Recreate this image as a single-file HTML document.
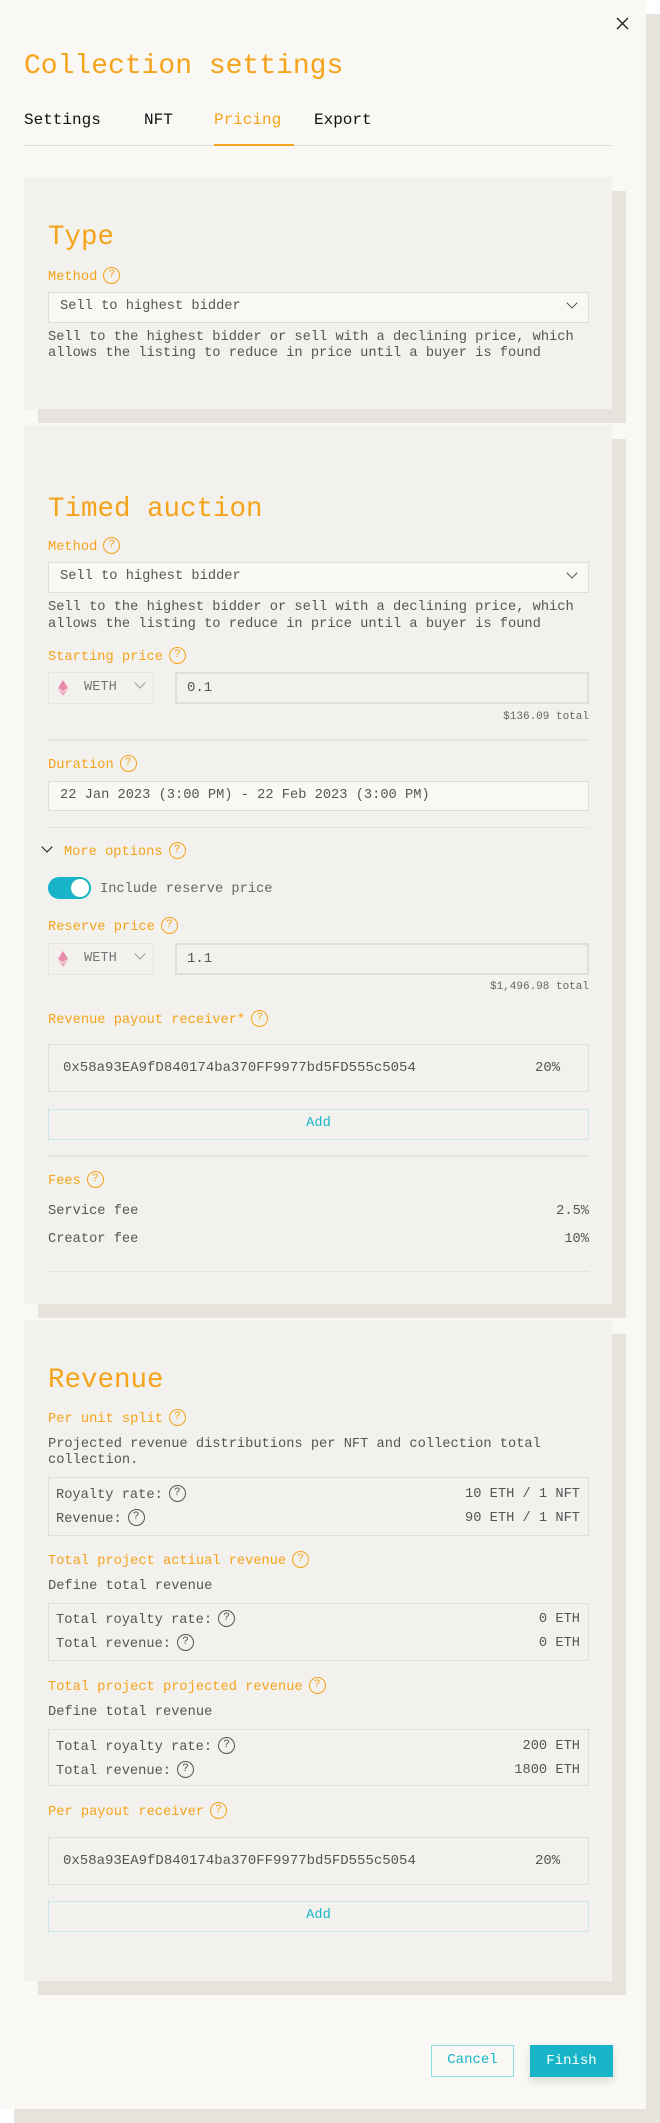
<!DOCTYPE html>
<html><head><meta charset="utf-8"><style>
*{margin:0;padding:0;box-sizing:border-box}
body{width:660px;height:2123px;background:#fff;position:relative;overflow:hidden;font-family:"Liberation Mono",monospace;color:#555}
.a{position:absolute;white-space:nowrap}
.sh{position:absolute;background:#e6e2dc}
.card{position:absolute;background:#f2f1ed;left:24px;width:588px}
.o{color:#f5a31a;font-size:13.7px;line-height:18px}
.t{font-size:13.7px;line-height:18px;color:#555}
.h{color:#f5a31a;font-size:27.5px;line-height:32px;left:48px}
.q{display:inline-block;width:17px;height:17px;border:1.5px solid #f5a31a;border-radius:50%;font-size:11px;line-height:14px;text-align:center;vertical-align:middle;margin-left:6px;color:#f5a31a;position:relative;top:-1px}
.q.d{border-color:#555;color:#555}
.box{position:absolute;left:48px;width:541px;border:1.5px solid #e0ded9}
.sel{background:#f9f8f5}
.div{position:absolute;left:48px;width:541px;height:2px;background:#e6e4e0}
.add{position:absolute;left:48px;width:541px;border:1.5px dotted #9fdde5;color:#18b5c8;text-align:center;font-size:13.7px}
.chev{position:absolute;width:8px;height:8px;border-right:1.3px solid #555;border-bottom:1.3px solid #555;transform:rotate(45deg)}
.eth{position:absolute;width:10px;height:16px}
</style></head><body>
<div class="sh" style="left:14px;top:14px;width:646px;height:2109px"></div>
<div style="position:absolute;left:0;top:0;width:646px;height:2109px;background:#f9f8f5"></div>

<svg class="a" style="left:616px;top:17px" width="13" height="13" viewBox="0 0 13 13"><path d="M1 1L12 12M12 1L1 12" stroke="#222" stroke-width="1.4"/></svg>
<div class="a" style="left:24px;top:51px;font-size:28px;line-height:32px;color:#f5a31a">Collection settings</div>
<div class="a" style="left:24px;top:110px;font-size:16px;line-height:20px;color:#111">Settings</div>
<div class="a" style="left:144px;top:110px;font-size:16px;line-height:20px;color:#111">NFT</div>
<div class="a" style="left:214px;top:110px;font-size:16px;line-height:20px;color:#f5a31a">Pricing</div>
<div class="a" style="left:314px;top:110px;font-size:16px;line-height:20px;color:#111">Export</div>
<div class="a" style="left:24px;top:145px;width:588px;height:1px;background:#deddd9"></div>
<div class="a" style="left:214px;top:144px;width:80px;height:2px;background:#f5a31a"></div>

<!-- card 1 -->
<div class="sh" style="left:38px;top:191px;width:588px;height:232px"></div>
<div class="card" style="top:177px;height:232px"></div>
<div class="a h" style="top:222px">Type</div>
<div class="a o" style="left:48px;top:268px">Method<span class="q">?</span></div>
<div class="box sel" style="top:292px;height:31px"></div>
<div class="a t" style="left:60px;top:298px">Sell to highest bidder</div>
<div class="chev" style="left:568px;top:299px"></div>
<div class="a t" style="left:48px;top:330px;line-height:16px">Sell to the highest bidder or sell with a declining price, which<br>allows the listing to reduce in price until a buyer is found</div>

<!-- card 2 -->
<div class="sh" style="left:38px;top:439px;width:588px;height:879px"></div>
<div class="card" style="top:425px;height:879px"></div>
<div class="a h" style="top:494px">Timed auction</div>
<div class="a o" style="left:48px;top:538px">Method<span class="q">?</span></div>
<div class="box sel" style="top:562px;height:31px"></div>
<div class="a t" style="left:60px;top:568px">Sell to highest bidder</div>
<div class="chev" style="left:568px;top:569px"></div>
<div class="a t" style="left:48px;top:599px;line-height:17px">Sell to the highest bidder or sell with a declining price, which<br>allows the listing to reduce in price until a buyer is found</div>

<div class="a o" style="left:48px;top:648px">Starting price<span class="q">?</span></div>
<div class="box" style="top:672px;height:32px;width:106px;border-color:#e8e6e1"></div>
<svg class="eth" style="left:58px;top:680px" viewBox="0 0 10 16"><path d="M5 0L10 8 5 11 0 8z" fill="#e88aaa"/><path d="M5 12L10 9 5 16 0 9z" fill="#f0a8c0"/></svg>
<div class="a t" style="left:84px;top:679px;color:#777">WETH</div>
<div class="chev" style="left:136px;top:679px;border-color:#999"></div>
<div class="box" style="top:672px;height:32px;left:175px;width:414px;border-width:2px"></div>
<div class="a t" style="left:187px;top:679px;font-size:14px">0.1</div>
<div class="a" style="right:71px;top:710px;font-size:11px;line-height:14px;color:#666">$136.09 total</div>
<div class="div" style="top:739px"></div>

<div class="a o" style="left:48px;top:756px">Duration<span class="q">?</span></div>
<div class="box sel" style="top:781px;height:30px"></div>
<div class="a t" style="left:60px;top:787px">22 Jan 2023 (3:00 PM) - 22 Feb 2023 (3:00 PM)</div>
<div class="div" style="top:827px;height:1px"></div>

<div class="chev" style="left:43px;top:843px;border-color:#111"></div>
<div class="a o" style="left:64px;top:843px">More options<span class="q">?</span></div>
<div class="a" style="left:48px;top:877px;width:43px;height:22px;border-radius:11px;background:#18b5c8"></div>
<div class="a" style="left:71px;top:879px;width:18px;height:18px;border-radius:50%;background:#fff"></div>
<div class="a t" style="left:100px;top:881px;color:#666">Include reserve price</div>

<div class="a o" style="left:48px;top:918px">Reserve price<span class="q">?</span></div>
<div class="box" style="top:943px;height:32px;width:106px;border-color:#e8e6e1"></div>
<svg class="eth" style="left:58px;top:951px" viewBox="0 0 10 16"><path d="M5 0L10 8 5 11 0 8z" fill="#e88aaa"/><path d="M5 12L10 9 5 16 0 9z" fill="#f0a8c0"/></svg>
<div class="a t" style="left:84px;top:950px;color:#777">WETH</div>
<div class="chev" style="left:136px;top:950px;border-color:#999"></div>
<div class="box" style="top:943px;height:32px;left:175px;width:414px;border-width:2px"></div>
<div class="a t" style="left:187px;top:950px;font-size:14px">1.1</div>
<div class="a" style="right:71px;top:980px;font-size:11px;line-height:14px;color:#666">$1,496.98 total</div>

<div class="a o" style="left:48px;top:1011px">Revenue payout receiver*<span class="q">?</span></div>
<div class="box" style="top:1044px;height:48px"></div>
<div class="a t" style="left:63px;top:1059px;font-size:14px">0x58a93EA9fD840174ba370FF9977bd5FD555c5054</div>
<div class="a t" style="left:535px;top:1059px;font-size:14px">20%</div>
<div class="add" style="top:1109px;height:31px;line-height:28px">Add</div>
<div class="div" style="top:1155px"></div>
<div class="a o" style="left:48px;top:1172px">Fees<span class="q">?</span></div>
<div class="a t" style="left:48px;top:1203px">Service fee</div>
<div class="a t" style="right:71px;top:1203px">2.5%</div>
<div class="a t" style="left:48px;top:1231px">Creator fee</div>
<div class="a t" style="right:71px;top:1231px">10%</div>
<div class="div" style="top:1271px;height:1px"></div>

<!-- card 3 -->
<div class="sh" style="left:38px;top:1334px;width:588px;height:661px"></div>
<div class="card" style="top:1320px;height:661px"></div>
<div class="a h" style="top:1365px">Revenue</div>
<div class="a o" style="left:48px;top:1410px">Per unit split<span class="q">?</span></div>
<div class="a t" style="left:48px;top:1437px;line-height:16px">Projected revenue distributions per NFT and collection total<br>collection.</div>
<div class="box" style="top:1477px;height:59px"></div>
<div class="a t" style="left:56px;top:1486px">Royalty rate:<span class="q d">?</span></div>
<div class="a t" style="right:80px;top:1486px">10 ETH / 1 NFT</div>
<div class="a t" style="left:56px;top:1510px">Revenue:<span class="q d">?</span></div>
<div class="a t" style="right:80px;top:1510px">90 ETH / 1 NFT</div>

<div class="a o" style="left:48px;top:1552px">Total project actiual revenue<span class="q">?</span></div>
<div class="a t" style="left:48px;top:1578px">Define total revenue</div>
<div class="box" style="top:1603px;height:58px"></div>
<div class="a t" style="left:56px;top:1611px">Total royalty rate:<span class="q d">?</span></div>
<div class="a t" style="right:80px;top:1611px">0 ETH</div>
<div class="a t" style="left:56px;top:1635px">Total revenue:<span class="q d">?</span></div>
<div class="a t" style="right:80px;top:1635px">0 ETH</div>

<div class="a o" style="left:48px;top:1678px">Total project projected revenue<span class="q">?</span></div>
<div class="a t" style="left:48px;top:1704px">Define total revenue</div>
<div class="box" style="top:1729px;height:57px"></div>
<div class="a t" style="left:56px;top:1738px">Total royalty rate:<span class="q d">?</span></div>
<div class="a t" style="right:80px;top:1738px">200 ETH</div>
<div class="a t" style="left:56px;top:1762px">Total revenue:<span class="q d">?</span></div>
<div class="a t" style="right:80px;top:1762px">1800 ETH</div>

<div class="a o" style="left:48px;top:1803px">Per payout receiver<span class="q">?</span></div>
<div class="box" style="top:1837px;height:48px"></div>
<div class="a t" style="left:63px;top:1852px;font-size:14px">0x58a93EA9fD840174ba370FF9977bd5FD555c5054</div>
<div class="a t" style="left:535px;top:1852px;font-size:14px">20%</div>
<div class="add" style="top:1901px;height:31px;line-height:28px">Add</div>

<!-- buttons -->
<div class="a" style="left:431px;top:2045px;width:83px;height:32px;border:1.5px solid #8fdbe5;color:#18b5c8;font-size:14px;line-height:29px;text-align:center">Cancel</div>
<div class="a" style="left:530px;top:2045px;width:83px;height:32px;background:#18b5c8;color:#fff;font-size:14px;line-height:32px;text-align:center;box-shadow:0 4px 8px rgba(0,0,0,0.12)">Finish</div>
</body></html>
